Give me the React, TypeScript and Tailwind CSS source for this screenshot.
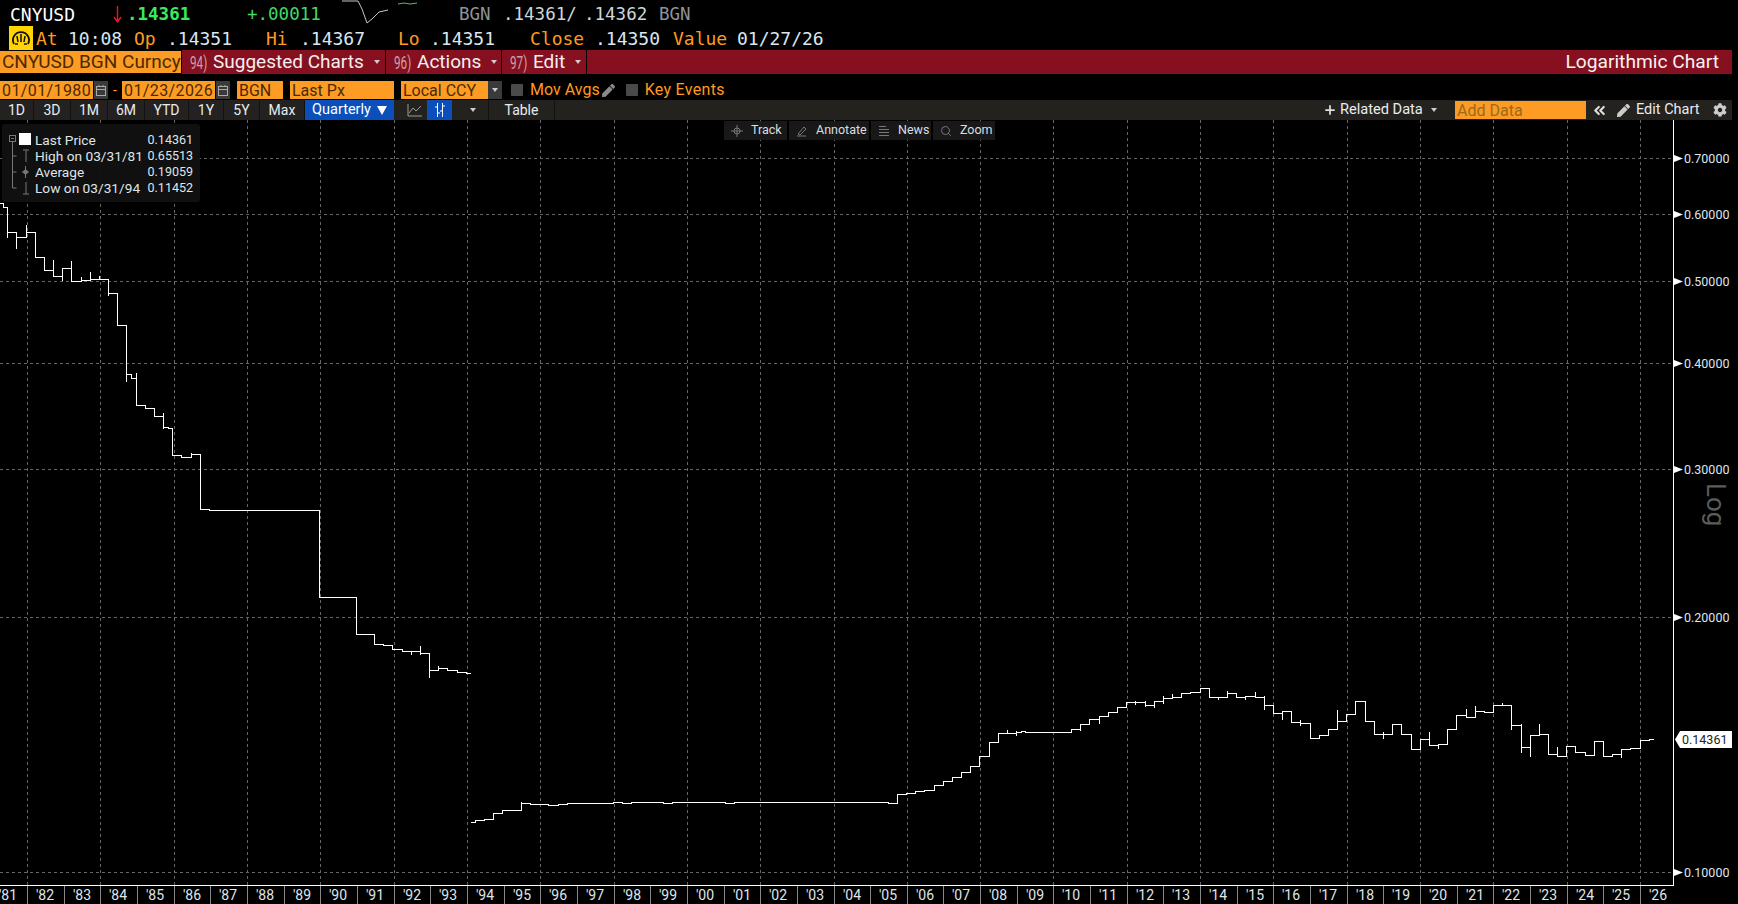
import { ChevronsLeft, Plus, Search } from "lucide-react";
import { FaCog, FaPen } from "react-icons/fa";

const s1: number[][] = [[0,203],[3,207],[7.5,232],[16.5,237],[26.5,232],[35.5,257],[44.5,270],[53.5,276],[62.5,268],[71.5,281],[81,280],[90.5,279],[99.5,279],[108.5,293],[117.5,325],[126.5,374],[131.5,378],[136.5,405],[145.5,408],[154.5,416],[163.5,427],[168,428],[172.5,455],[181.5,457],[191.5,454],[200.5,509],[209.5,510],[319.5,597],[356.5,634],[374.5,644],[383.5,645],[392.5,649],[402.5,651],[420.5,653],[429.5,670],[438.5,668],[447.5,670],[457.5,672],[466.5,673],[471,673]];

const s2: number[][] = [[471,822],[475.5,820],[484.5,819],[493.5,813],[502.5,810],[521.5,803],[530.5,804],[548.5,805],[558.5,804],[567.5,803],[613,802],[622,803],[631,802],[663,803],[672,802],[725,803],[734,802],[880,802],[888,803],[897.5,794],[906.5,793],[915.5,791],[924.5,790],[934.5,785],[943.5,781],[952.5,777],[961.5,772],[970.5,766],[979.5,756],[989.5,742],[998.5,733],[1016.5,732],[1021,731],[1025.5,732],[1071.5,729],[1080.5,724],[1089.5,719],[1099.5,716],[1108.5,712],[1117.5,707],[1126.5,702],[1145.5,705],[1154.5,701],[1163.5,698],[1172.5,697],[1181.5,693],[1190.5,692],[1200.5,688],[1209.5,697],[1227.5,693],[1236.5,697],[1245.5,696],[1255.5,697],[1264.5,705],[1273.5,713],[1282.5,711],[1291.5,722],[1300.5,723],[1310.5,738],[1319.5,735],[1328.5,729],[1337.5,721],[1346.5,714],[1355.5,701],[1365.5,721],[1374.5,734],[1392.5,724],[1401.5,734],[1411.5,749],[1420.5,739],[1429.5,745],[1438.5,744],[1447.5,729],[1456.5,715],[1466.5,717],[1475.5,711],[1484.5,712],[1493.5,705],[1511.5,725],[1521.5,747],[1530.5,735],[1539.5,734],[1548.5,754],[1557.5,756],[1566.5,746],[1575.5,752],[1585.5,755],[1594.5,741],[1603.5,756],[1612.5,754],[1621.5,749],[1630.5,748],[1640.5,740],[1649.5,739],[1653.5,739]];

// little high/low ticks that stick out of the steps
const wicks: number[][] = [[7.5,207,238],[16.5,232,249],[26.5,225,237],[53.5,260,276],[62.5,268,281],[71.5,261,281],[81,277,281],[90.5,272,280],[99.5,276,280],[108.5,280,296],[126.5,325,382],[136.5,373,405],[163.5,413,429],[191.5,453,457],[411.5,651,655],[420.5,646,655],[429.5,653,678],[438.5,666,670],[521.5,802,810],[1007.5,730,733],[1016.5,731,736],[1080.5,724,731],[1099.5,716,724],[1135.5,701,705],[1145.5,701,707],[1154.5,701,708],[1163.5,696,704],[1172.5,694,698],[1218.5,697,700],[1227.5,691,693],[1245.5,696,700],[1255.5,692,697],[1264.5,696,710],[1282.5,711,720],[1300.5,720,726],[1337.5,710,729],[1383.5,732,739],[1429.5,732,745],[1438.5,744,749],[1466.5,709,717],[1475.5,706,712],[1502.5,703,705],[1511.5,705,730],[1521.5,724,753],[1530.5,735,757],[1539.5,724,735],[1557.5,747,756],[1612.5,754,757],[1621.5,749,758]];

const stepPath = (pts: number[][]) => {
  let d = "";
  pts.forEach((p, i) => {
    const y = p[1] + 0.5;
    if (i === 0) d += `M${p[0]} ${y}`;
    else d += `H${p[0]}V${y}`;
  });
  return d;
};

const gridY = [158, 214, 281, 363, 469, 617, 872];
const priceLabels = [
  ["0.70000", 158], ["0.60000", 214], ["0.50000", 281], ["0.40000", 363],
  ["0.30000", 469], ["0.20000", 617], ["0.10000", 872],
] as const;

const yearX = (yr: number) => Math.round(27 + (yr - 1982) * 36.66);
const years: number[] = [];
for (let y = 1981; y <= 2026; y++) years.push(y);

const mono = "font-['DejaVu_Sans_Mono',monospace]";
const orangeBox = "h-[18px] bg-[#fd9c24] text-[#4c2a00] text-[16px] leading-[20px] px-[2px] overflow-hidden whitespace-nowrap";

function Label({ children }: { children: string }) {
  return <span className="text-[#ff9a1f]">{children}</span>;
}

function Gauge() {
  return (
    <div className="w-[24px] h-[24px] -mt-[2px] bg-[#ffd400] flex items-center justify-center">
      <svg width="20" height="20" viewBox="0 0 20 20" fill="none" stroke="#111" strokeWidth="1.8">
        <path d="M3 16 A8 8 0 1 1 17 16" />
        <path d="M10 6v8M6 8l1 6M14 8l-1 6M4 16h3M13 16h3" strokeWidth="1.5" />
      </svg>
    </div>
  );
}

function RedButton({ num, text, className }: { num: string; text: string; className: string }) {
  return (
    <div className={`h-full bg-[#860f20] flex items-center pl-[8px] ${className}`}>
      <span className="text-[#c9a3a8] text-[18px] w-[23px] scale-x-[0.65] origin-left">{num}</span>
      <span className="text-[#f4f0ee] text-[19px] whitespace-nowrap">{text}</span>
      <span className="ml-[10px] w-0 h-0 border-x-[3px] border-x-transparent border-t-[4px] border-t-[#d8c8ca]" />
    </div>
  );
}

function Check() {
  return <span className="block w-[12px] h-[12px] bg-[#4a4a4a] rounded-[1px]" />;
}

function Calendar() {
  return (
    <div className="w-[14px] h-[18px] bg-[#3a3a3a] flex items-center justify-center">
      <svg width="10" height="11" viewBox="0 0 10 11" fill="none" stroke="#aaa">
        <rect x="0.5" y="1.5" width="9" height="9" />
        <path d="M0 4.5h10M3 0v2M7 0v2" />
      </svg>
    </div>
  );
}

function Tab({ text, w }: { text: string; w: string }) {
  return (
    <div className={`h-full flex items-center justify-center bg-[#232220] border-r border-[#111] text-[#e8ecef] ${w}`}>
      {text}
    </div>
  );
}

function FloatBtn({ icon, text, w }: { icon: React.ReactNode; text: string; w: string }) {
  return (
    <div className={`h-full bg-[#1b1b1b]/90 flex items-center gap-[8px] pl-[7px] text-[#d9dee2] ${w}`}>
      {icon}
      <span>{text}</span>
    </div>
  );
}

function Legend() {
  return (
    <div className="absolute left-[2px] top-[4px] w-[198px] h-[78px] bg-[#111]/95 rounded-[3px] pt-[8px] text-[#dfe5e9] text-[13.7px] leading-[16px]">
      <svg className="absolute left-0 top-0" width="34" height="78" fill="none" stroke="#777">
        <g transform="translate(-2 0)">
          <rect x="9.5" y="11.5" width="6" height="6" />
          <path d="M11 14.5h3M12.5 18v46h4M12.5 32h4M12.5 48h4" />
          <rect x="19" y="9" width="12" height="12" fill="#fff" stroke="none" />
          <path d="M23 26h6M26 26v12M22 48h7M25.5 42v12M26 58v12M23 70h6" />
          <circle cx="25.5" cy="48" r="2" fill="#777" />
        </g>
      </svg>
      <div className="pl-[33px] pr-[7px] flex flex-col">
        {[
          ["Last Price", "0.14361"],
          ["High on 03/31/81", "0.65513"],
          ["Average", "0.19059"],
          ["Low on 03/31/94", "0.11452"],
        ].map(([a, b]) => (
          <div key={a} className="flex justify-between whitespace-nowrap">
            <span>{a}</span>
            <span className="text-[12.5px]">{b}</span>
          </div>
        ))}
      </div>
    </div>
  );
}

function Chart() {
  return (
    <svg className="absolute inset-0" width="1738" height="784" viewBox="0 120 1738 784">
      <g stroke="#666" strokeDasharray="3 3" shapeRendering="crispEdges">
        {gridY.map((y) => (
          <line key={y} x1="0" x2="1673" y1={y + 0.5} y2={y + 0.5} />
        ))}
        {years.filter((y) => y % 2 === 0).map((y) => (
          <line key={y} x1={yearX(y) + 0.5} x2={yearX(y) + 0.5} y1="120" y2="885" />
        ))}
      </g>

      <g stroke="#fff" fill="none" shapeRendering="crispEdges">
        <path d={stepPath(s1)} />
        <path d={stepPath(s2)} />
        {wicks.map((w, i) => (
          <line key={i} x1={w[0]} x2={w[0]} y1={w[1]} y2={w[2]} />
        ))}
      </g>

      <path d="M1673.5 120V885.5H0" stroke="#fff" fill="none" shapeRendering="crispEdges" />

      <g stroke="#888" shapeRendering="crispEdges">
        {years.slice(1).map((y) => (
          <line key={y} x1={yearX(y) + 0.5} x2={yearX(y) + 0.5} y1="886" y2="904" />
        ))}
      </g>
      <g fill="#dfe6ea" fontFamily="Roboto, sans-serif" fontSize="14" textAnchor="middle">
        {years.map((y) => (
          <text key={y} x={yearX(y) + 18} y="900">{"'" + String(y).slice(2)}</text>
        ))}
      </g>

      {priceLabels.map(([t, y]) => (
        <g key={t}>
          <path d={`M1674 ${y - 3}L1683 ${y + 0.5}L1674 ${y + 4}Z`} fill="#fff" />
          <text x="1684" y={y + 5} fill="#dfe6ea" fontFamily="Roboto, sans-serif" fontSize="12.5">{t}</text>
        </g>
      ))}

      <text transform="translate(1707 483) rotate(90)" fill="#5c5c5c" fontFamily="Roboto, sans-serif" fontSize="26">Log</text>

      <path d="M1680 731H1732V748H1680L1675 739.5Z" fill="#fff" />
      <text x="1682" y="744" fill="#222" fontFamily="Roboto, sans-serif" fontSize="12.5">0.14361</text>
    </svg>
  );
}

export default function App() {
  return (
    <div className="w-full h-screen bg-black overflow-hidden flex flex-col font-['Roboto',sans-serif]">
      {/* quote header */}
      <div className={`h-[25px] pt-[4px] flex items-center pl-[10px] text-[17.5px] whitespace-nowrap ${mono} relative`}>
        <span className="text-white w-[105px] text-[18px]">CNYUSD</span>
        <svg className="mr-[5px] -ml-[2px]" width="9" height="17" viewBox="0 0 9 17" fill="none" stroke="#f0141e" strokeWidth="1.4">
          <path d="M4.5 0V16M1 11L4.5 16L8 11" />
        </svg>
        <span className="text-[#3bea5c] font-bold w-[120px]">.14361</span>
        <span className="text-[#3fd966] w-[212px]">+.00011</span>
        <span className="text-[#8d9499] w-[44px]">BGN</span>
        <span className="text-[#cdd6dc] w-[81px]">.14361/</span>
        <span className="text-[#cdd6dc] w-[75px]">.14362</span>
        <span className="text-[#8d9499]">BGN</span>
        <svg className="absolute left-[340px] top-0" width="82" height="25" fill="none">
          <path d="M2 1H18L22 9L27 23L32 19L39 12L48 10" stroke="#c6c6c6" />
          <path d="M58 4L64 3L70 4L77 3" stroke="#3fc95e" />
        </svg>
      </div>
      <div className={`h-[25px] pt-[2px] flex items-center pl-[9px] text-[18px] whitespace-nowrap text-[#dbe6ee] ${mono}`}>
        <Gauge />
        <span className="ml-[3px] w-[32px]"><Label>At</Label></span>
        <span className="w-[66px]">10:08</span>
        <span className="w-[33px]"><Label>Op</Label></span>
        <span className="w-[99px]">.14351</span>
        <span className="w-[34px]"><Label>Hi</Label></span>
        <span className="w-[98px]">.14367</span>
        <span className="w-[32px]"><Label>Lo</Label></span>
        <span className="w-[100px]">.14351</span>
        <span className="w-[65px]"><Label>Close</Label></span>
        <span className="w-[78px]">.14350</span>
        <span className="w-[64px]"><Label>Value</Label></span>
        <span>01/27/26</span>
      </div>

      {/* red menu bar */}
      <div className="h-[24px] w-[1732px] flex gap-[1px]">
        <div className="w-[181px] h-[22px] mt-[1px] bg-[#fd9c24] text-[#4c2a00] text-[19px] leading-[22px] pl-[2px] whitespace-nowrap overflow-hidden">CNYUSD BGN Curncy</div>
        <RedButton num="94)" text="Suggested Charts" className="w-[203px]" />
        <RedButton num="96)" text="Actions" className="w-[115px]" />
        <RedButton num="97)" text="Edit" className="w-[84px]" />
        <div className="flex-1 h-full bg-[#860f20] flex items-center justify-end pr-[13px] text-[#f6f2f0] text-[19.2px]">Logarithmic Chart</div>
      </div>

      {/* date and field row */}
      <div className="h-[18px] mt-[7px] flex items-center">
        <div className={`${orangeBox} w-[93px] tracking-[0.4px]`}>01/01/1980</div>
        <div className="ml-[1px]"><Calendar /></div>
        <span className="w-[14px] text-center text-[#ff9a1f] text-[14px]">-</span>
        <div className={`${orangeBox} w-[93px] tracking-[0.4px]`}>01/23/2026</div>
        <div className="ml-[1px]"><Calendar /></div>
        <div className={`${orangeBox} w-[46px] ml-[7px]`}>BGN</div>
        <div className={`${orangeBox} w-[104px] ml-[7px]`}>Last Px</div>
        <div className={`${orangeBox} w-[87px] ml-[7px]`}>Local CCY</div>
        <div className="w-[14px] h-[18px] bg-[#3a3a3a] flex items-center justify-center">
          <span className="w-0 h-0 border-x-[3px] border-x-transparent border-t-[4px] border-t-[#ccc]" />
        </div>
        <span className="ml-[9px]"><Check /></span>
        <span className="ml-[7px] text-[#ff9a1f] text-[16px] leading-[20px]">Mov Avgs</span>
        <FaPen className="ml-[2px] text-[#8a8a8a] text-[13px]" />
        <span className="ml-[11px]"><Check /></span>
        <span className="ml-[7px] text-[#ff9a1f] text-[16px] leading-[20px] tracking-[0.3px]">Key Events</span>
      </div>

      {/* range toolbar */}
      <div className="h-[20px] mt-[1px] w-[1732px] bg-[#23221f] flex items-center text-[14px] text-[#e8ecef]">
        <Tab text="1D" w="w-[34px]" />
        <Tab text="3D" w="w-[37px]" />
        <Tab text="1M" w="w-[37px]" />
        <Tab text="6M" w="w-[37px]" />
        <Tab text="YTD" w="w-[44px]" />
        <Tab text="1Y" w="w-[35px]" />
        <Tab text="5Y" w="w-[36px]" />
        <Tab text="Max" w="w-[45px]" />
        <div className="w-[89px] h-full bg-[#0a4fba] flex items-center justify-center gap-[6px] text-white text-[14.5px]">
          Quarterly
          <span className="w-0 h-0 border-x-[5px] border-x-transparent border-t-[9px] border-t-white" />
        </div>
        <div className="ml-[8px] w-[25px] h-full flex items-center justify-center">
          <svg width="16" height="14" viewBox="0 0 16 14" fill="none" stroke="#9a9a9a">
            <path d="M1 1V13H15M2 10L6 5L9 8L14 3" />
          </svg>
        </div>
        <div className="w-[25px] h-full bg-[#0a4fba] flex items-center justify-center">
          <svg width="14" height="16" viewBox="0 0 14 16" fill="none" stroke="#fff">
            <path d="M4.5 1V15M9.5 1V15M2 5H4.5M4.5 11H7M7 9H9.5M9.5 4H12" />
          </svg>
        </div>
        <div className="ml-[6px] w-[31px] h-full flex items-center justify-center border-r border-[#111]">
          <span className="w-0 h-0 border-x-[3px] border-x-transparent border-t-[4px] border-t-[#ccc]" />
        </div>
        <div className="w-[66px] h-full flex items-center justify-center border-r border-[#111]">Table</div>
        <div className="w-[763px] h-full" />
        <div className="w-[125px] h-full flex items-center pl-[5px] gap-[3px] text-[14.6px]">
          <Plus size={14} strokeWidth={3} className="text-[#ddd]" />
          Related Data
          <span className="ml-[5px] w-0 h-0 border-x-[3px] border-x-transparent border-t-[4px] border-t-[#ccc]" />
        </div>
        <div className="ml-[12px] w-[131px] h-[18px] bg-[#fd9c24] text-[#9c691c] text-[16px] leading-[20px] pl-[2px]">Add Data</div>
        <div className="ml-[2px] w-[22px] h-full flex items-center justify-center">
          <ChevronsLeft size={17} strokeWidth={3} className="text-[#ddd]" />
        </div>
        <div className="ml-[2px] w-[93px] h-full flex items-center pl-[5px] gap-[6px] text-[14.5px]">
          <FaPen className="text-[#ccc] text-[13px]" />
          Edit Chart
        </div>
        <div className="ml-[2px] w-[25px] h-full flex items-center justify-center">
          <FaCog className="text-[#ccc] text-[14px]" />
        </div>
      </div>

      {/* chart */}
      <div className="relative flex-1">
        <Chart />
        <Legend />
        <div className="absolute left-[724px] top-[1px] h-[19px] flex gap-[2px] text-[12.5px]">
          <FloatBtn
            w="w-[63px]"
            text="Track"
            icon={
              <svg width="12" height="12" viewBox="0 0 12 12" fill="none" stroke="#777">
                <circle cx="6" cy="6" r="3" />
                <path d="M6 0V12M0 6H12" />
              </svg>
            }
          />
          <FloatBtn
            w="w-[80px]"
            text="Annotate"
            icon={
              <svg width="12" height="12" viewBox="0 0 12 12" fill="none" stroke="#777">
                <path d="M1 11H10M2 9L8 2L10 4L4 10Z" />
              </svg>
            }
          />
          <FloatBtn
            w="w-[60px]"
            text="News"
            icon={
              <svg width="12" height="12" viewBox="0 0 12 12" fill="none" stroke="#777">
                <path d="M1 1.5H8M1 4.5H11M1 7.5H11M1 10.5H11" />
              </svg>
            }
          />
          <FloatBtn w="w-[62px]" text="Zoom" icon={<Search size={12} className="text-[#777]" />} />
        </div>
      </div>
    </div>
  );
}
